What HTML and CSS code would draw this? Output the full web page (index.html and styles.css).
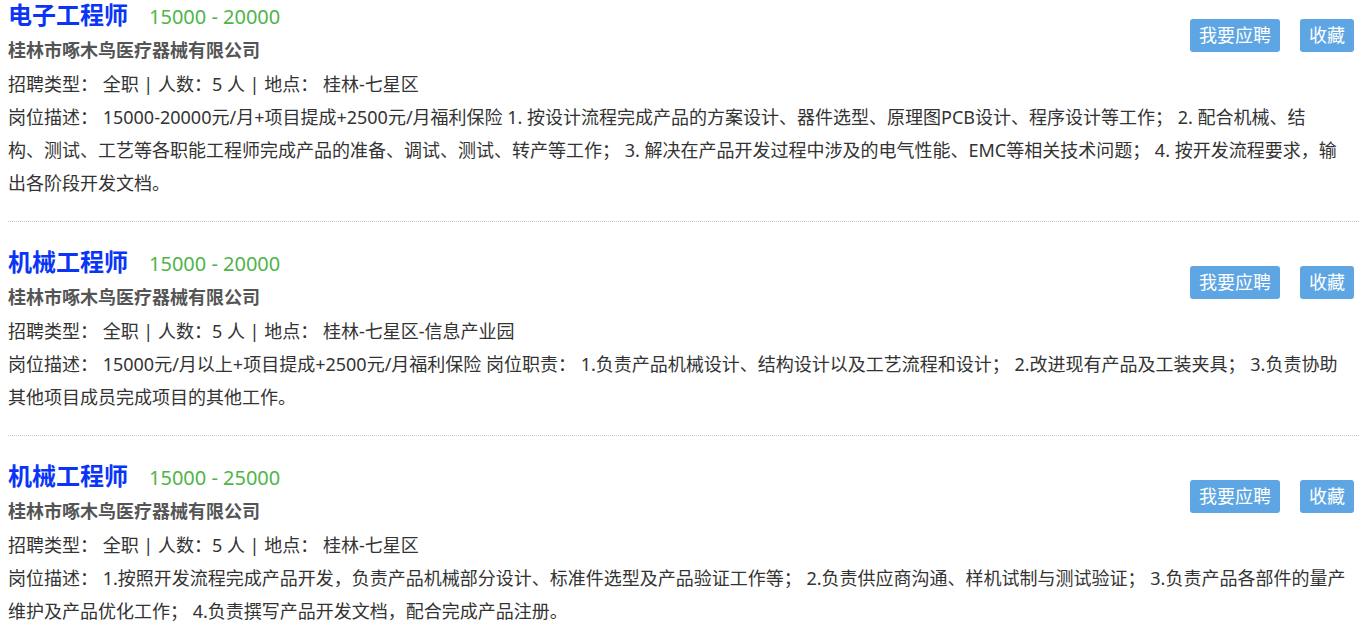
FILE: index.html
```html
<!DOCTYPE html>
<html lang="zh-CN">
<head>
<meta charset="utf-8">
<title>职位列表</title>
<link rel="stylesheet" href="styles.css">
</head>
<body>
<div class="job-list">
  <div class="job">
    <div class="actions">
      <a class="btn">我要应聘</a>
      <a class="btn">收藏</a>
    </div>
    <div class="title-row"><span class="title">电子工程师</span><span class="salary">15000 - 20000</span></div>
    <div class="company">桂林市啄木鸟医疗器械有限公司</div>
    <div class="meta">招聘类型： 全职 | 人数：5 人 | 地点： 桂林-七星区</div>
    <div class="desc">岗位描述： 15000-20000元/月+项目提成+2500元/月福利保险 1. 按设计流程完成产品的方案设计、器件选型、原理图PCB设计、程序设计等工作； 2. 配合机械、结<br>构、测试、工艺等各职能工程师完成产品的准备、调试、测试、转产等工作； 3. 解决在产品开发过程中涉及的电气性能、EMC等相关技术问题； 4. 按开发流程要求，输<br>出各阶段开发文档。</div>
  </div>
  <div class="job">
    <div class="actions">
      <a class="btn">我要应聘</a>
      <a class="btn">收藏</a>
    </div>
    <div class="title-row"><span class="title">机械工程师</span><span class="salary">15000 - 20000</span></div>
    <div class="company">桂林市啄木鸟医疗器械有限公司</div>
    <div class="meta">招聘类型： 全职 | 人数：5 人 | 地点： 桂林-七星区-信息产业园</div>
    <div class="desc">岗位描述： 15000元/月以上+项目提成+2500元/月福利保险 岗位职责： 1.负责产品机械设计、结构设计以及工艺流程和设计； 2.改进现有产品及工装夹具； 3.负责协助<br>其他项目成员完成项目的其他工作。</div>
  </div>
  <div class="job">
    <div class="actions">
      <a class="btn">我要应聘</a>
      <a class="btn">收藏</a>
    </div>
    <div class="title-row"><span class="title">机械工程师</span><span class="salary">15000 - 25000</span></div>
    <div class="company">桂林市啄木鸟医疗器械有限公司</div>
    <div class="meta">招聘类型： 全职 | 人数：5 人 | 地点： 桂林-七星区</div>
    <div class="desc">岗位描述： 1.按照开发流程完成产品开发，负责产品机械部分设计、标准件选型及产品验证工作等； 2.负责供应商沟通、样机试制与测试验证； 3.负责产品各部件的量产<br>维护及产品优化工作； 4.负责撰写产品开发文档，配合完成产品注册。</div>
  </div>
</div>
</body>
</html>
```
FILE: styles.css
```css
html, body {
  margin: 0;
  padding: 0;
  background: #fff;
}
body {
  font-family: "Noto Sans", "Noto Sans CJK SC", sans-serif;
  color: #333;
  font-size: 18px;
}
.job-list {
  padding: 0 8px;
}
.job {
  padding: 25px 0 21px;
  border-bottom: 1px dotted #c8c8c8;
}
.job:first-child {
  padding-top: 0;
}
.actions {
  float: right;
  display: flex;
  gap: 20px;
  margin-top: 19px;
  margin-right: 5px;
}
.btn {
  display: block;
  height: 33px;
  line-height: 33px;
  padding: 0 9px;
  background: #5da6e3;
  color: #fff;
  font-size: 18px;
  border-radius: 3px;
  cursor: pointer;
}
.title-row {
  height: 30px;
  line-height: 30px;
  white-space: nowrap;
}
.title {
  font-size: 24px;
  font-weight: bold;
  color: #0a35f7;
}
.salary {
  font-size: 20px;
  color: #4fb548;
  margin-left: 21px;
}
.company {
  margin-top: 3px;
  line-height: 35px;
  font-weight: bold;
  color: #555;
}
.meta {
  line-height: 33px;
  white-space: nowrap;
}
.desc {
  line-height: 33px;
  white-space: nowrap;
}
```
